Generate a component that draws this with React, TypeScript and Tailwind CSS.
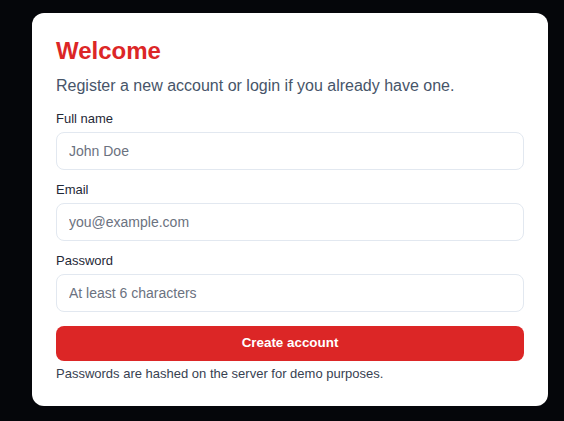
import React from 'react';

const fields = [
  { label: 'Full name', type: 'text', placeholder: 'John Doe' },
  { label: 'Email', type: 'email', placeholder: 'you@example.com' },
  { label: 'Password', type: 'password', placeholder: 'At least 6 characters' },
];

export default function App() {
  return (
    <div className="min-h-screen bg-[#05060a] pt-[13px] pb-[15px] font-['Liberation_Sans',Arial,sans-serif]">
      <div className="ml-[32px] w-[516px] rounded-xl bg-white p-6">
        <h1 className="text-2xl font-bold leading-[1.2] text-[#dc2626]">Welcome</h1>
        <p className="mt-2 text-base leading-6 text-[#475569]">
          Register a new account or login if you already have one.
        </p>

        <form className="mt-[13px] flex flex-col gap-3" onSubmit={(e) => e.preventDefault()}>
          {fields.map((f) => (
            <label key={f.label} className="flex flex-col">
              <span className="mb-[5px] text-[13px] leading-4 text-[#1f2937]">{f.label}</span>
              <input
                type={f.type}
                placeholder={f.placeholder}
                className="h-[38px] rounded-lg border border-[#e2e8f0] bg-white px-3 text-sm text-[#1f2937] outline-none placeholder:text-[#6b7280]"
              />
            </label>
          ))}
          <button
            type="submit"
            className="mt-[2px] h-[35px] rounded-lg bg-[#dc2626] text-[13.4px] font-bold text-white"
          >
            Create account
          </button>
        </form>

        <p className="mt-[5px] text-[13px] leading-4 text-[#374151]">
          Passwords are hashed on the server for demo purposes.
        </p>
      </div>
    </div>
  );
}
